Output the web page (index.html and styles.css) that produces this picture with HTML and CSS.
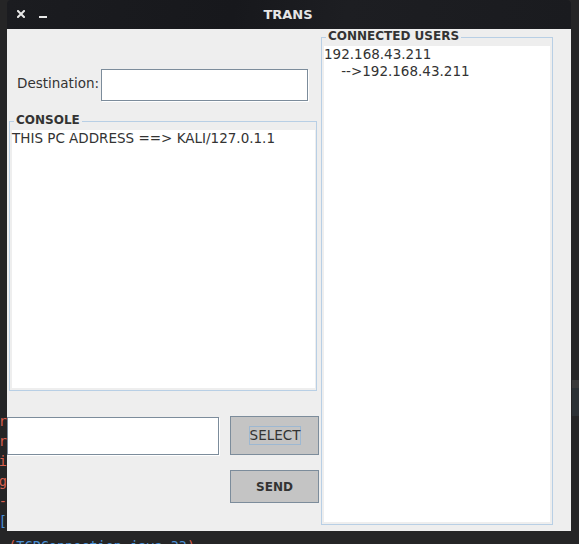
FILE: index.html
```html
<!DOCTYPE html>
<html>
<head>
<meta charset="utf-8">
<title>TRANS</title>
<link rel="stylesheet" href="styles.css">
</head>
<body>
<div class="desktop">
  <div class="code-left">
    <div class="red">var</div>
    <div class="red">var</div>
    <div class="red">gui</div>
    <div class="red">msg</div>
    <div class="red">---</div>
    <div class="blue">[</div>
  </div>
  <div class="side-block light"></div>
  <div class="side-block slate"></div>
  <div class="code-bottom"><span class="red">=(</span><span class="blue">TCPConnection.java:33</span><span class="red">)</span></div>

  <div class="window">
    <div class="titlebar">
      <div class="controls">
        <svg class="close" width="8" height="8" viewBox="0 0 8 8"><path d="M1 1L7 7M7 1L1 7" stroke="#e8e8e8" stroke-width="2" stroke-linecap="square"/></svg>
        <span class="min"></span>
      </div>
      <div class="title">TRANS</div>
      <div></div>
    </div>
    <div class="content">
      <div class="left">
        <div class="dest-row">
          <span class="dest-label">Destination:</span>
          <div class="field dest-field"></div>
        </div>
        <div class="titled console">
          <span class="titled-label">CONSOLE</span>
          <div class="area">THIS PC ADDRESS ==&gt; KALI/127.0.1.1</div>
        </div>
        <div class="bottom-row">
          <div class="field msg-field"></div>
          <div class="buttons">
            <div class="btn select"><span class="focus">SELECT</span></div>
            <div class="btn send">SEND</div>
          </div>
        </div>
      </div>
      <div class="titled users">
        <span class="titled-label">CONNECTED USERS</span>
        <div class="area list"><div class="sel">192.168.43.211</div><div>    --&gt;192.168.43.211</div></div>
      </div>
    </div>
  </div>
</div>
</body>
</html>
```

FILE: styles.css
```css
html, body {
  margin: 0;
  padding: 0;
}
body {
  width: 579px;
  height: 544px;
  overflow: hidden;
  background: #242424;
  font-family: "DejaVu Sans", sans-serif;
}
.desktop {
  position: relative;
  width: 579px;
  height: 544px;
  background: #252526;
}
.code-left {
  position: absolute;
  left: 0;
  top: 411px;
  width: 7px;
  overflow: hidden;
  font-family: "DejaVu Sans Mono", monospace;
  font-size: 13.5px;
  line-height: 20px;
}
.code-left div {
  width: 7px;
  white-space: nowrap;
  display: flex;
  justify-content: flex-end;
}
.red { color: #d9604f; }
.blue { color: #4a8fd4; }
.code-bottom {
  position: absolute;
  left: 0;
  top: 538px;
  font-family: "DejaVu Sans Mono", monospace;
  font-size: 13.5px;
  line-height: 16px;
  white-space: nowrap;
}
.side-block {
  position: absolute;
  left: 572px;
  width: 7px;
}
.side-block.light { top: 380px; height: 8px; background: #3a3a3a; }
.side-block.slate { top: 388px; height: 28px; background: #2c3135; }

.window {
  position: absolute;
  left: 7px;
  top: 0;
  width: 564px;
  height: 531px;
  display: flex;
  flex-direction: column;
}
.titlebar {
  height: 29px;
  flex: none;
  display: grid;
  grid-template-columns: 1fr auto 1fr;
  align-items: center;
  background: linear-gradient(100deg, #1b1c20 0%, #17181c 40%, #1d1e22 60%, #1a1b1f 100%);
  border-radius: 4px 4px 0 0;
}
.controls {
  display: flex;
  align-items: flex-start;
  padding-left: 10px;
  height: 8px;
  margin-top: -2px;
}
.close {
  display: block;
}
.min {
  display: block;
  width: 8px;
  height: 2px;
  background: #e8e8e8;
  margin-left: 14px;
  margin-top: 6px;
}
.title {
  color: #e6e6e6;
  font-weight: bold;
  font-size: 13px;
  margin-left: -2px;
}
.content {
  flex: 1;
  display: flex;
  align-items: flex-start;
  background: #eeeeee;
  color: #333333;
  font-size: 13.5px;
}
.left {
  width: 314px;
  flex: none;
  display: flex;
  flex-direction: column;
}
.dest-row {
  display: flex;
  align-items: center;
  margin-top: 40px;
  padding-left: 10px;
}
.dest-label {
  width: 84px;
  margin-top: -5px;
}
.field {
  box-sizing: border-box;
  background: #ffffff;
  border: 1px solid #7c8c9b;
  box-shadow: 1px 1px 0 #ffffff;
}
.dest-field {
  width: 207px;
  height: 32px;
}
.titled {
  position: relative;
  box-sizing: border-box;
  border: 1px solid #b8cfe5;
  padding: 8px 1px 1px 2px;
}
.titled-label {
  position: absolute;
  top: -9px;
  left: 4px;
  padding: 0 2px;
  background: #eeeeee;
  font-weight: bold;
  font-size: 12px;
  line-height: 14px;
  color: #333333;
}
.area {
  background: #ffffff;
  height: 100%;
  line-height: 17px;
  white-space: pre;
}
.console {
  margin-top: 20px;
  margin-left: 2px;
  width: 308px;
  height: 270px;
  padding-bottom: 2px;
}
.console .area {
  padding-left: 0;
}
.bottom-row {
  display: flex;
  align-items: flex-start;
  margin-top: 25px;
}
.msg-field {
  width: 212px;
  height: 38px;
  margin-top: 1px;
}
.buttons {
  display: flex;
  flex-direction: column;
  gap: 15px;
  margin-left: 11px;
}
.btn {
  box-sizing: border-box;
  width: 89px;
  display: flex;
  align-items: center;
  justify-content: center;
  background: #c4c4c4;
  border: 1px solid #7c8c9b;
  color: #333333;
}
.select {
  height: 39px;
}
.focus {
  border: 1px solid #9db8d2;
  line-height: 17px;
  padding: 0;
  margin-left: 1px;
}
.send {
  height: 33px;
  font-weight: bold;
  font-size: 12px;
}
.users {
  margin-top: 8px;
  width: 232px;
  height: 488px;
  padding: 8px 2px 2px 2px;
}
.list {
  padding-left: 0;
}
```
